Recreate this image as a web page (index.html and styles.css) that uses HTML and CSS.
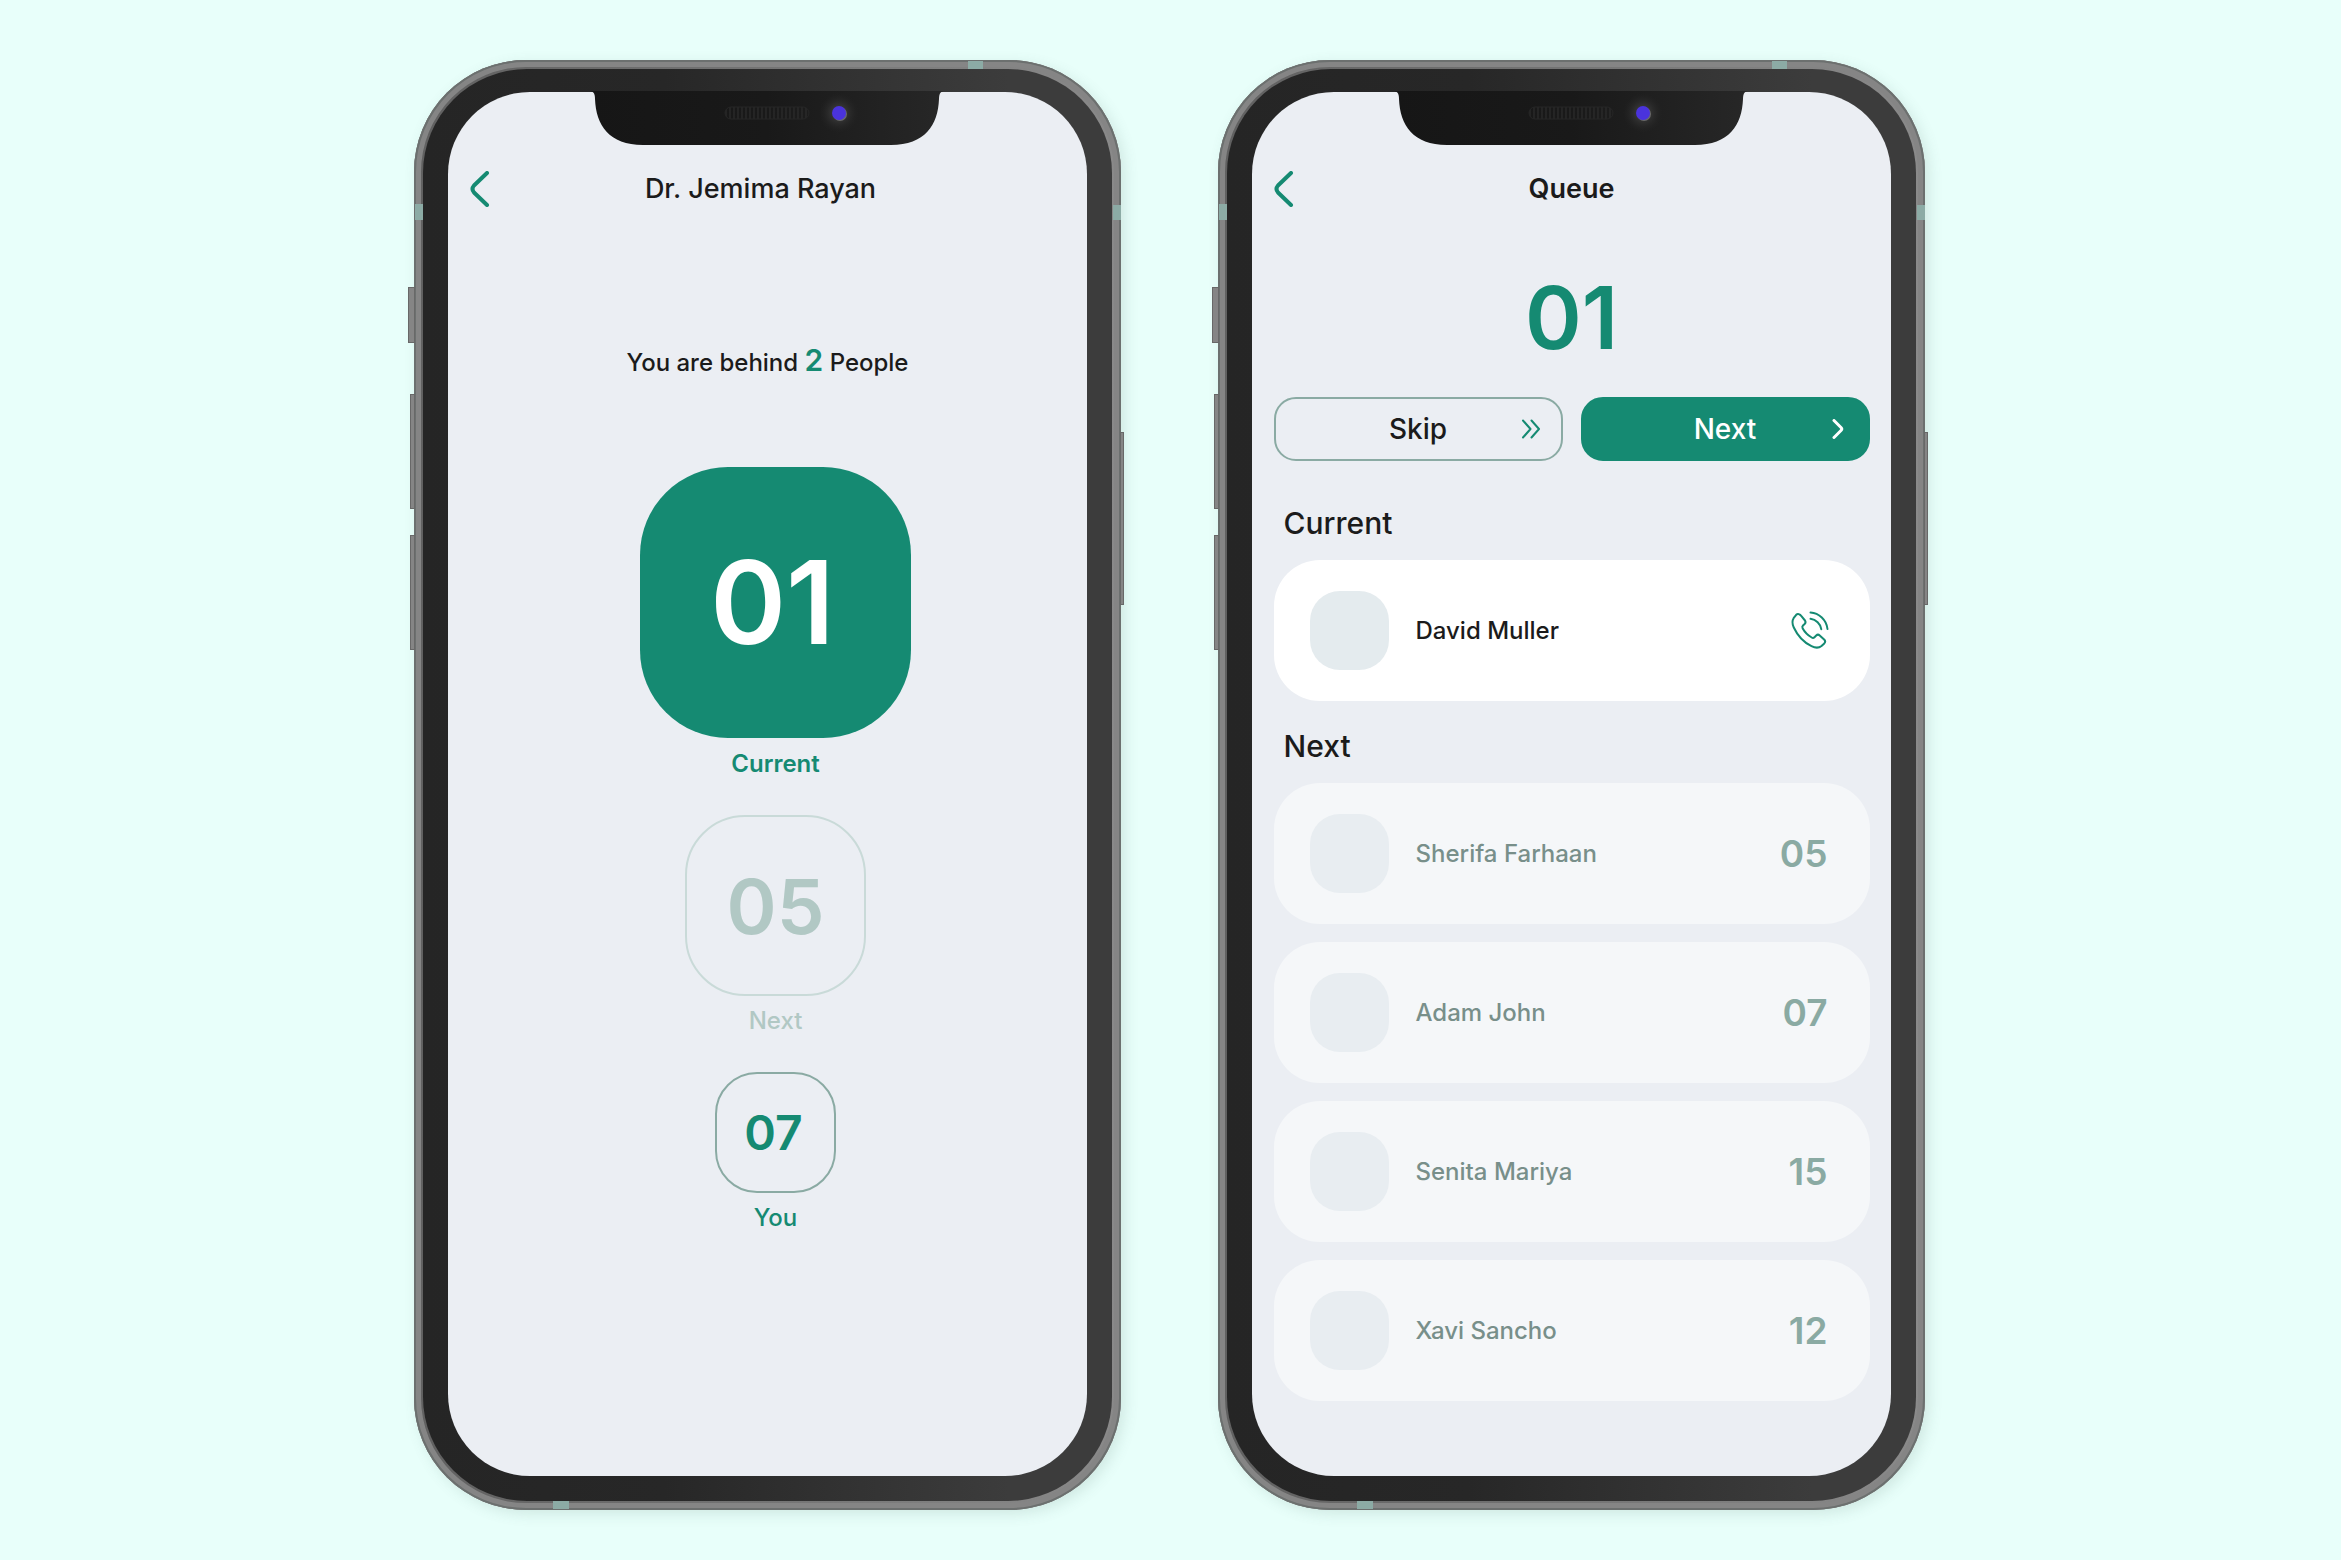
FILE: index.html
```html
<!DOCTYPE html>
<html lang="en">
<head>
<meta charset="utf-8">
<meta name="viewport" content="width=device-width, initial-scale=1">
<title>Clinic queue</title>
<link rel="stylesheet" href="styles.css">
</head>
<body>
<svg class="defs" aria-hidden="true">
  <defs>
    <linearGradient id="notch-fill" x1="0" x2="1" y1="0" y2="0">
      <stop offset="0" stop-color="#161616"/>
      <stop offset="0.5" stop-color="#191919"/>
      <stop offset="1" stop-color="#272727"/>
    </linearGradient>
    <radialGradient id="lens-glow">
      <stop offset="0" stop-color="#444"/>
      <stop offset="0.5" stop-color="#2c2c2c"/>
      <stop offset="1" stop-color="#222" stop-opacity="0"/>
    </radialGradient>
    <pattern id="mesh" width="4" height="4" patternUnits="userSpaceOnUse">
      <path d="M1 0v4" stroke="#303030" stroke-width="1"/>
    </pattern>
    <symbol id="notch" viewBox="0 0 356 54">
      <path d="M0 0C4 0 6 2 6 8C7 34 20 54 54 54H302C336 54 349 34 350 8C350 2 352 0 356 0Z" fill="url(#notch-fill)"/>
      <rect x="136" y="16" width="84" height="12" rx="6" fill="url(#mesh)" stroke="#262626"/>
      <circle cx="250" cy="22" r="20" fill="url(#lens-glow)"/>
      <circle cx="251" cy="23" r="7" fill="#6a6a6a"/>
      <circle cx="250" cy="22" r="7" fill="#4a33dc"/>
    </symbol>
    <symbol id="back" viewBox="0 0 20 36">
      <path d="M17 2L4 14.500Q1 18 4 21.500L17 34" fill="none" stroke="currentColor" stroke-width="4" stroke-linecap="round" stroke-linejoin="round"/>
    </symbol>
  </defs>
</svg>

<main class="stage">
  <section class="phone" aria-label="Patient view">
    <span class="key key-mute"></span><span class="key key-up"></span><span class="key key-down"></span><span class="key key-power"></span>
    <span class="band band-left"></span><span class="band band-right"></span><span class="band band-top"></span><span class="band band-bottom"></span>
    <div class="bezel">
      <div class="screen">
        <svg class="notch" aria-hidden="true"><use href="#notch"/></svg>
        <header class="bar bar-doctor">
          <button class="back" type="button" aria-label="Back"><svg aria-hidden="true"><use href="#back"/></svg></button>
          <h1 class="title">Dr. Jemima Rayan</h1>
        </header>
        <p class="behind">You are behind <strong>2</strong> People</p>
        <ol class="tickets">
          <li class="ticket ticket-current"><span class="tile">01</span><span class="caption">Current</span></li>
          <li class="ticket ticket-next"><span class="tile">05</span><span class="caption">Next</span></li>
          <li class="ticket ticket-you"><span class="tile">07</span><span class="caption">You</span></li>
        </ol>
      </div>
    </div>
  </section>

  <section class="phone" aria-label="Doctor view">
    <span class="key key-mute"></span><span class="key key-up"></span><span class="key key-down"></span><span class="key key-power"></span>
    <span class="band band-left"></span><span class="band band-right"></span><span class="band band-top"></span><span class="band band-bottom"></span>
    <div class="bezel">
      <div class="screen">
        <svg class="notch" aria-hidden="true"><use href="#notch"/></svg>
        <header class="bar">
          <button class="back" type="button" aria-label="Back"><svg aria-hidden="true"><use href="#back"/></svg></button>
          <h1 class="title title-strong">Queue</h1>
        </header>
        <p class="serving">01</p>
        <div class="actions">
          <button class="action action-skip" type="button">
            <span>Skip</span>
            <svg class="action-icon" viewBox="0 0 20 20" aria-hidden="true"><path d="M2 1.500L9.500 10L2 18.500M10.500 1.500L18 10L10.500 18.500"/></svg>
          </button>
          <button class="action action-next" type="button">
            <span>Next</span>
            <svg class="action-icon" viewBox="0 0 20 20" aria-hidden="true"><path d="M6 1.500L13 8.500Q14.500 10 13 11.500L6 18.500"/></svg>
          </button>
        </div>
        <h2 class="section">Current</h2>
        <ul class="people">
          <li class="person person-active">
            <span class="avatar"></span><span class="name">David Muller</span>
            <button class="call" type="button" aria-label="Call David Muller">
              <svg viewBox="-1 1 38 38" aria-hidden="true"><path d="M7.800 3.200C6.900 2.700 6 3 5.200 3.800L2.600 7.200C.8 10 1.200 13 2.800 16.500C6.500 24.500 13 31.500 20.500 35.200C24 36.900 27.500 37.400 30.500 35L33.300 32.400C34.300 31.300 34.500 30 33.400 28.800L28.700 24.400C27.600 23.400 26.200 23.500 25.200 24.500L23.500 26.200C22.700 27 21.600 27.100 20.700 26.500C17 24.300 13.500 20.800 11.600 17.200C11.100 16.200 11.300 15.200 12 14.500L13.600 13C14.600 12 14.800 10.700 14 9.500L10.200 4.800C9.400 3.900 8.500 3.500 7.800 3.200Z"/><path d="M19.500 1.500C28 2 35.500 9 36.500 18M19.500 7.800C25 8.500 29.500 12.800 30.300 18.200"/></svg>
            </button>
          </li>
        </ul>
        <h2 class="section section-next">Next</h2>
        <ol class="people">
          <li class="person"><span class="avatar"></span><span class="name">Sherifa Farhaan</span><span class="number">05</span></li>
          <li class="person"><span class="avatar"></span><span class="name">Adam John</span><span class="number">07</span></li>
          <li class="person"><span class="avatar"></span><span class="name">Senita Mariya</span><span class="number">15</span></li>
          <li class="person"><span class="avatar"></span><span class="name">Xavi Sancho</span><span class="number">12</span></li>
        </ol>
      </div>
    </div>
  </section>
</main>
</body>
</html>
```

FILE: styles.css
```css
:root {
  --green: #158a72;
  --sage: #8aaaa3;
  --ink: #1b1b1b;
  --screen: #ebeef3;
}

* { box-sizing: border-box; }

body {
  margin: 0;
  background: #e8fffa;
  color: var(--ink);
  font-family: Inter, "Liberation Sans", sans-serif;
  font-weight: 500;
}

h1, h2, p, ul, ol { margin: 0; padding: 0; font-weight: inherit; }
ul, ol { list-style: none; }

button {
  margin: 0;
  padding: 0;
  border: 0;
  background: none;
  color: inherit;
  font: inherit;
  cursor: pointer;
}

.defs { position: absolute; width: 0; height: 0; }

.stage {
  display: flex;
  justify-content: center;
  align-items: flex-start;
  gap: 97px;
  min-height: 100vh;
  padding: 60px 43px 50px 40px;
}

/* Handset shell */
.phone {
  position: relative;
  flex: 0 1 707px;
  padding: 9px;
  border-radius: 112px;
  background: linear-gradient(90deg, #606060, #747474 50%, #8a8a8a);
  box-shadow: inset 0 0 0 2px #6c706f, inset 0 0 0 7px #858585, 4px 4px 14px rgba(80, 110, 105, 0.16);
}

.bezel {
  padding: 23px 25px 25px;
  border-radius: 104px;
  background: linear-gradient(90deg, #252525, #272727 35%, #3c3c3c 85%);
}

.screen {
  position: relative;
  display: flex;
  flex-direction: column;
  min-height: 1384px;
  padding: 76px 21px 74px 22px;
  border-radius: 82px;
  background: var(--screen);
}

.notch {
  position: absolute;
  top: -1px;
  left: 50%;
  width: 356px;
  height: 54px;
  transform: translateX(-50%);
}

.key { position: absolute; background: #858585; border: 1px solid #686868; }
.key-mute { left: -6px; top: 227px; width: 7px; height: 56px; }
.key-up { left: -4px; top: 334px; width: 5px; height: 115px; }
.key-down { left: -4px; top: 475px; width: 5px; height: 115px; }
.key-power { right: -3px; top: 372px; width: 4px; height: 173px; }

.band { position: absolute; background: #8caba5; }
.band-left { left: 1px; top: 144px; width: 8px; height: 16px; }
.band-right { right: 0; top: 145px; width: 8px; height: 15px; }
.band-top { right: 138px; top: 1px; width: 15px; height: 8px; }
.band-bottom { left: 139px; bottom: 1px; width: 16px; height: 8px; }

/* Title bar */
.bar {
  display: grid;
  grid-template-columns: 20px 1fr 20px;
  align-items: center;
  height: 42px;
}
.bar-doctor { padding-right: 14px; }
.back { width: 20px; height: 36px; color: var(--green); }
.back svg { display: block; width: 20px; height: 36px; }
.title { font-size: 27px; line-height: 42px; text-align: center; }
.title-strong { font-weight: 600; }

/* Patient view */
.behind {
  margin-top: 130px;
  font-size: 24px;
  line-height: 40px;
  text-align: center;
}
.behind strong { color: var(--green); font-size: 30px; font-weight: 600; }

.tickets {
  display: flex;
  flex-direction: column;
  gap: 35px;
  margin-top: 84px;
  padding-left: 16px;
}
.ticket {
  display: flex;
  flex-direction: column;
  align-items: center;
  gap: 9px;
  color: var(--green);
}
.tile {
  display: grid;
  place-items: center;
  border: 2px solid var(--sage);
  font-weight: 600;
  line-height: 1;
}
.caption { font-size: 24px; line-height: 32px; }

.ticket-current { gap: 10px; }
.ticket-current .tile {
  width: 271px;
  height: 271px;
  padding-right: 6px;
  border: 0;
  border-radius: 88px;
  background: var(--green);
  color: #fff;
  font-size: 115px;
}
.ticket-current .caption { font-weight: 600; }
.ticket-next { color: #b1c8c4; }
.ticket-next .tile {
  width: 181px;
  height: 181px;
  border-color: #c9dad8;
  border-radius: 60px;
  font-size: 76px;
}
.ticket-you .tile {
  width: 121px;
  height: 121px;
  padding-right: 4px;
  border-radius: 42px;
  font-size: 48px;
}

/* Doctor view */
.serving {
  margin-top: 58px;
  color: var(--green);
  font-size: 86px;
  font-weight: 600;
  line-height: 100px;
  text-align: center;
}

.actions {
  display: grid;
  grid-template-columns: 1fr 1fr;
  gap: 18px;
  margin-top: 29px;
}
.action {
  display: grid;
  grid-template-columns: 20px 1fr 20px;
  align-items: center;
  height: 64px;
  padding: 0 20px;
  border: 2px solid var(--sage);
  border-radius: 22px;
  font-size: 28px;
}
.action span { grid-column: 2; }
.action-icon {
  width: 20px;
  height: 20px;
  fill: none;
  stroke: var(--green);
  stroke-width: 2;
  stroke-linecap: round;
  stroke-linejoin: round;
}
.action-next { border-color: var(--green); background: var(--green); color: #fff; }
.action-next .action-icon { stroke: #fff; stroke-width: 3; }

.section {
  margin: 42px 0 17px;
  padding-left: 10px;
  font-size: 30px;
  line-height: 40px;
}
.section-next { margin-top: 25px; }

.people { display: flex; flex-direction: column; gap: 18px; }
.person {
  display: flex;
  align-items: center;
  gap: 27px;
  height: 141px;
  padding: 0 42px 0 36px;
  border-radius: 46px;
  background: #f5f7f9;
}
.avatar { width: 79px; height: 79px; border-radius: 30px; background: #e8edf1; }
.name { flex: 1; color: #788f8a; font-size: 24px; }
.number { color: var(--sage); font-size: 37px; font-weight: 600; }
.person-active { background: #fff; }
.person-active .avatar { background: #e4ebee; }
.person-active .name { color: var(--ink); }
.call { width: 38px; height: 38px; }
.call svg {
  display: block;
  width: 38px;
  height: 38px;
  overflow: visible;
  fill: none;
  stroke: var(--green);
  stroke-width: 2;
  stroke-linecap: round;
  stroke-linejoin: round;
}
```
